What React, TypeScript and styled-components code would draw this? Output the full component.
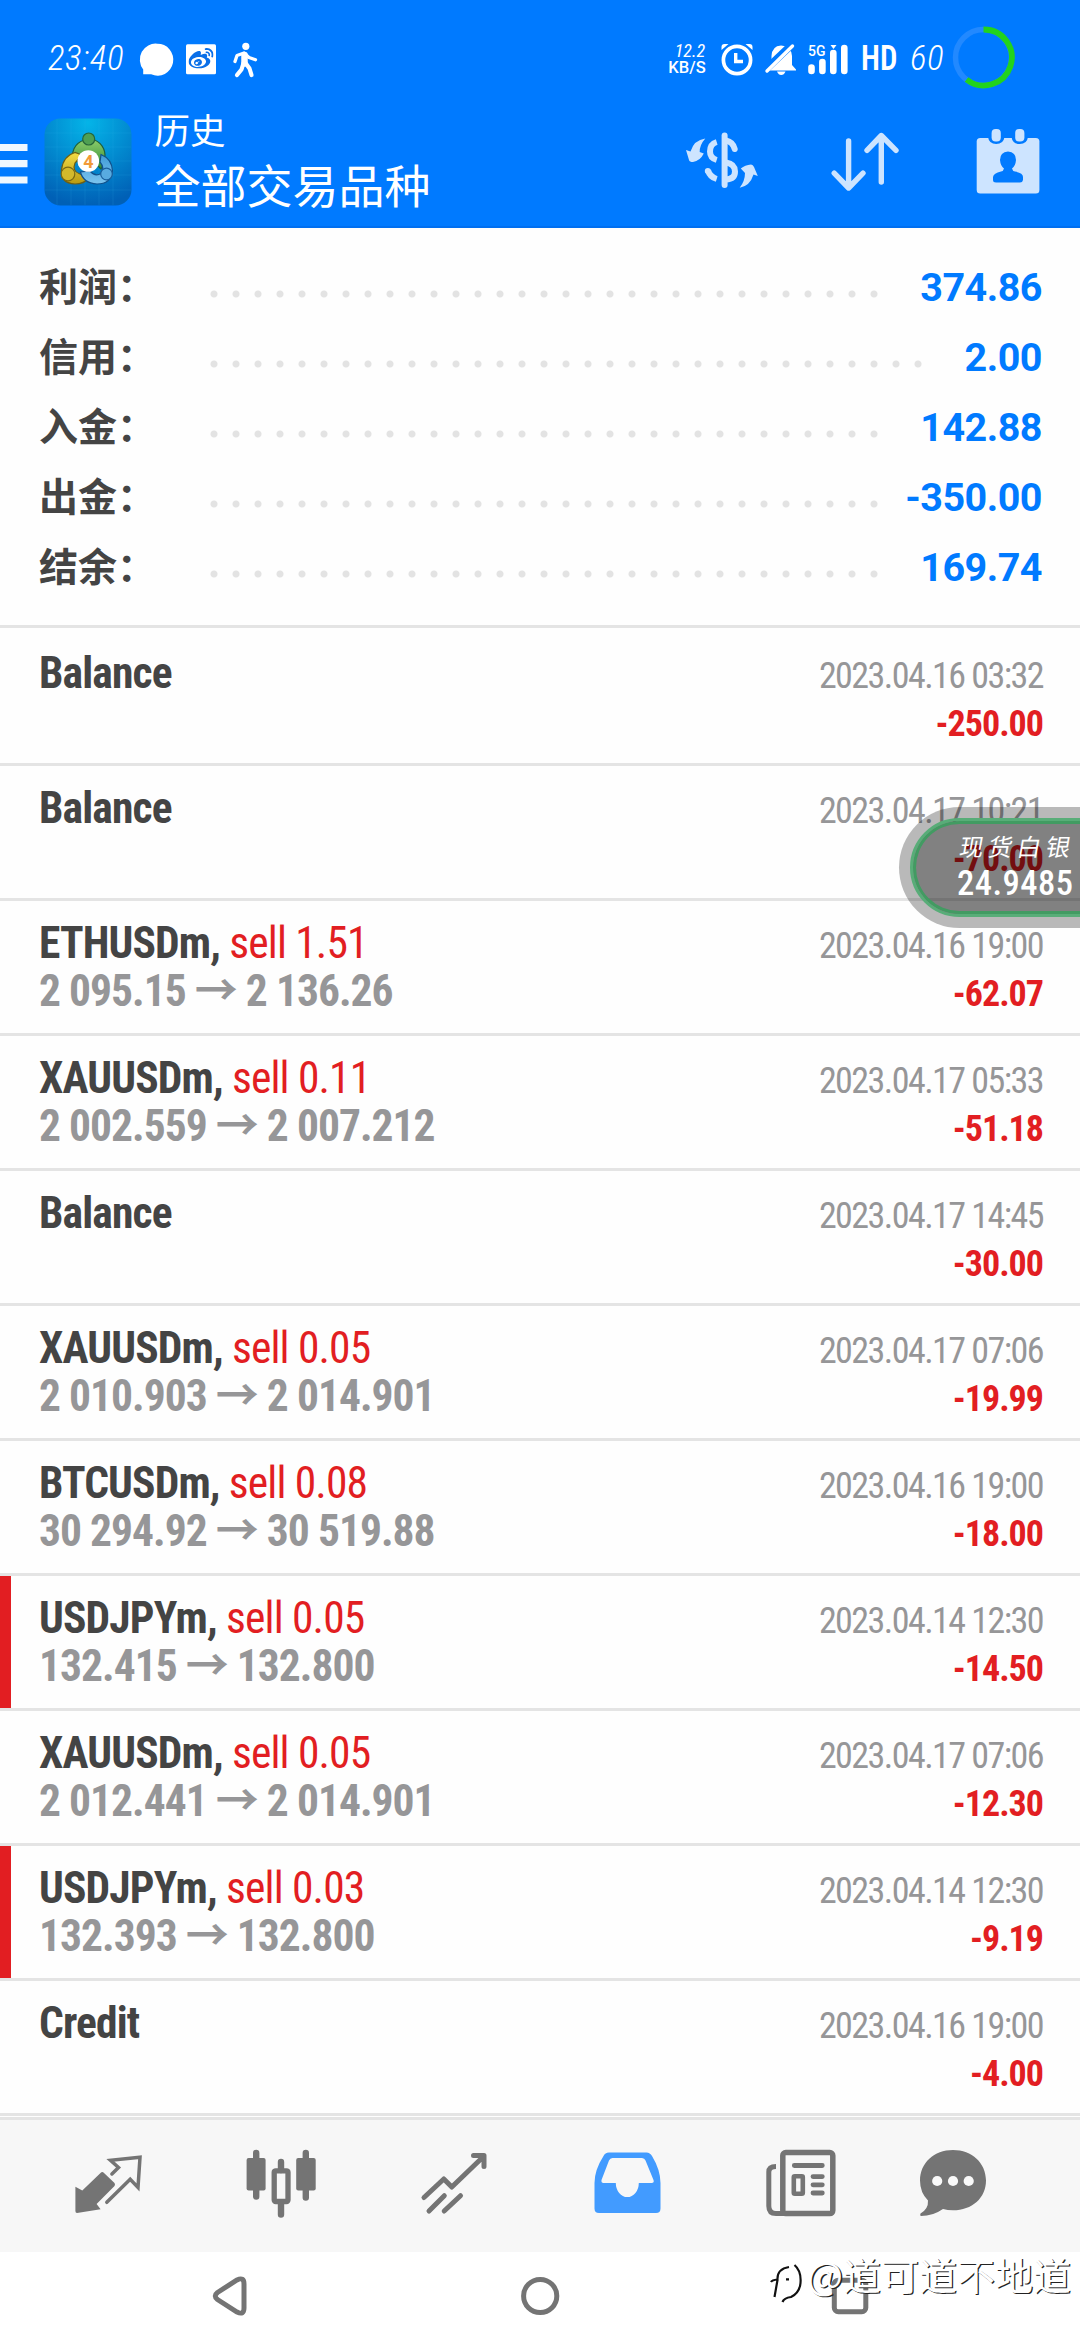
import React from "react";
import styled, { createGlobalStyle } from "styled-components";
import { FaWeibo } from "react-icons/fa";

const BLUE = "#007aff";
const LINE = "#e4e4e4";
const RED = "#e21e22";
const ICON = "#747474";
const TINT = "#cde4ff";

const GlobalStyle = createGlobalStyle`
  *, *::before, *::after { box-sizing: border-box; }
  body { margin: 0; background: #fff; }
`;

const Screen = styled.div`
  position: relative;
  width: 1080px;
  height: 2340px;
  display: flex;
  flex-direction: column;
  overflow: hidden;
  background: #fefefe;
  font-family: "Roboto Condensed", "Noto Sans CJK SC", sans-serif;
  font-variant-ligatures: none;
`;

const Header = styled.header`
  flex: none;
  height: 228px;
  background: ${BLUE};
  border-bottom: 2px solid #006ff0;
  color: #fff;
`;

const StatusBar = styled.div`
  display: flex;
  align-items: center;
  height: 111px;
  padding: 6px 0 0 46px;
`;

const StatusGroup = styled.div`
  display: flex;
  align-items: center;
  &:last-child {
    margin-left: auto;
  }
`;

const StatusDigits = styled.span<{ $width: number; $indent: number }>`
  width: ${(p) => p.$width}px;
  font-size: 35px;
  line-height: 35px;
  font-style: italic;
  font-weight: 350;
  letter-spacing: 0.6px;
  padding-left: ${(p) => p.$indent}px;
  white-space: nowrap;
`;

const NetSpeed = styled.div`
  width: 50px;
  display: flex;
  flex-direction: column;
  align-items: center;
  white-space: nowrap;
`;

const SpeedValue = styled.span`
  font-size: 18px;
  line-height: 17px;
  font-style: italic;
  font-weight: 400;
  padding-left: 6px;
`;

const SpeedUnit = styled.span`
  font-family: Roboto, sans-serif;
  font-size: 16.5px;
  font-weight: 500;
  line-height: 17px;
`;

const HdLabel = styled.span`
  width: 48px;
  padding-left: 7px;
  font-size: 35px;
  line-height: 35px;
  font-weight: 600;
  span {
    display: inline-block;
    transform: scaleX(0.88);
    transform-origin: left;
  }
`;

const Toolbar = styled.div`
  display: flex;
  height: 115px;
`;

const Titles = styled.div`
  display: flex;
  flex-direction: column;
  flex: 1;
  padding-left: 4.5px;
  font-family: "Noto Sans CJK SC", sans-serif;
`;

const Caption = styled.span`
  font-size: 35.5px;
  line-height: 36px;
`;

const Title = styled.span`
  margin-top: 8px;
  font-size: 46px;
  line-height: 56px;
`;

const Summary = styled.section`
  flex: none;
  padding: 23px 38px 24px 39px;
  border-bottom: 3px solid ${LINE};
`;

const SummaryRow = styled.div`
  display: flex;
  align-items: center;
  height: 70px;
`;

const SummaryLabel = styled.span`
  width: 163.5px;
  font-family: "Noto Sans CJK SC", sans-serif;
  font-weight: 700;
  font-size: 39px;
  line-height: 60px;
  margin-top: -4px;
  color: #444;
`;

const Leader = styled.span<{ $dots: number }>`
  width: ${(p) => p.$dots * 22}px;
  height: 22px;
  margin-top: 16px;
  background: radial-gradient(circle, #e3e3e3 3px, transparent 4px) 0 0 / 22px 22px repeat-x;
`;

const SummaryValue = styled.span`
  margin-left: auto;
  margin-top: 3px;
  font-family: Roboto, sans-serif;
  font-weight: 700;
  font-size: 39.5px;
  letter-spacing: -0.5px;
  line-height: 48px;
  color: ${BLUE};
`;

const Deals = styled.main`
  flex: none;
  padding-top: 3px;
`;

const DealRow = styled.article<{ $flagged: boolean }>`
  position: relative;
  display: flex;
  flex-direction: column;
  height: 135px;
  padding: 19px 37px 0 39px;
  border-bottom: 3px solid ${LINE};
  &::before {
    content: "";
    display: ${(p) => (p.$flagged ? "block" : "none")};
    position: absolute;
    left: 0;
    top: 0;
    bottom: 0;
    width: 11px;
    background: ${RED};
  }
`;

const DealLine = styled.div`
  display: flex;
  align-items: baseline;
  justify-content: space-between;
  height: 48px;
  line-height: 48px;
  white-space: pre;
  &::before {
    content: "\\200b";
    width: 0;
    font-size: 43.5px;
  }
`;

const Symbol = styled.span`
  flex: 1;
  font-size: 43.5px;
  font-weight: 680;
  letter-spacing: -0.85px;
  color: #444;
`;

const Side = styled.span`
  font-weight: 400;
  color: ${RED};
`;

const Prices = styled.span`
  font-size: 43.5px;
  font-weight: 680;
  letter-spacing: -0.98px;
  color: #969698;
`;

const Arrow = styled.span`
  font-family: "Noto Sans CJK SC", sans-serif;
  font-weight: 700;
  font-size: 43px;
  line-height: 0;
`;

const Stamp = styled.time`
  font-size: 36px;
  letter-spacing: -1.55px;
  color: #969698;
`;

const Amount = styled.span`
  margin-left: auto;
  font-size: 36px;
  font-weight: 700;
  letter-spacing: -1px;
  color: ${RED};
`;

const Ticker = styled.aside`
  position: absolute;
  left: 899px;
  top: 807px;
  width: 240px;
  height: 121px;
  padding: 11px;
  border-radius: 61px;
  background: rgba(0, 0, 0, 0.27);
`;

const TickerFace = styled.div`
  display: flex;
  flex-direction: column;
  height: 99px;
  padding: 9px 0 0 44px;
  border: 3px solid #58ad78;
  border-radius: 50px;
  background: rgba(0, 0, 0, 0.3);
  box-shadow: inset 0 0 0 3px #429b62;
  color: #fff;
`;

const TickerName = styled.span`
  font-family: "Noto Sans CJK SC", sans-serif;
  font-size: 24px;
  line-height: 32px;
  letter-spacing: 4.8px;
  transform: skewX(-10deg);
  white-space: nowrap;
  padding-left: 3px;
`;

const TickerPrice = styled.span`
  font-family: "Roboto Condensed", sans-serif;
  font-weight: 500;
  font-size: 34.5px;
  letter-spacing: 0.5px;
  line-height: 42px;
`;

const TabBar = styled.nav`
  flex: none;
  display: flex;
  height: 135px;
  margin-top: 1px;
  background: #f7f7f7;
  border-top: 3px solid ${LINE};
`;

const SystemNav = styled.nav`
  display: flex;
  height: 88px;
  background: #fff;
`;

const Watermark = styled.div`
  position: absolute;
  left: 768px;
  top: 2244px;
  display: flex;
  align-items: center;
  height: 60px;
  font-family: "Noto Sans CJK SC", sans-serif;
  font-size: 38px;
  line-height: 60px;
  color: #fff;
  text-shadow: 1.4px 1.4px 0.5px #222;
  white-space: nowrap;
`;

const Canvas = styled.svg`
  flex: none;
  display: block;
`;

type GlyphProps = { x: number; y: number; w: number; h: number; children: React.ReactNode };
const Glyph = ({ x, y, w, h, children }: GlyphProps) => (
  <Canvas width={w} height={h} viewBox={`${x} ${y} ${w} ${h}`} fill="none">
    {children}
  </Canvas>
);

const status = { y: 6, h: 105 };
const tool = { y: 111, h: 115 };
const tab = { y: 2120, h: 132 };
const sys = { y: 2252, h: 88 };

const AppLogo = () => (
  <Glyph x={36} w={114} {...tool}>
    <defs>
      <radialGradient id="tile" cx="0.5" cy="0.05" r="0.95">
        <stop offset="0" stopColor="#04b4e8" />
        <stop offset="0.5" stopColor="#028bd0" />
        <stop offset="1" stopColor="#0060b6" />
      </radialGradient>
      <linearGradient id="leaf" x1="0" y1="0" x2="0" y2="1">
        <stop offset="0" stopColor="#8fce6c" />
        <stop offset="1" stopColor="#2f8a36" />
      </linearGradient>
      <linearGradient id="gold" x1="0" y1="0" x2="0" y2="1">
        <stop offset="0" stopColor="#f3dc45" />
        <stop offset="1" stopColor="#b89a12" />
      </linearGradient>
      <linearGradient id="sky" x1="0" y1="0" x2="0" y2="1">
        <stop offset="0" stopColor="#3f9bd8" />
        <stop offset="1" stopColor="#7cc4ee" />
      </linearGradient>
    </defs>
    <rect x="44.500" y="118.500" width="87" height="87" rx="16" fill="url(#tile)" />
    <path
      d="M57 119V205M71 119V205M85 119V205M99 119V205M113 119V205M45 133H131M45 147H131M45 161H131M45 175H131M45 190H131"
      stroke="#3fc0ee"
      strokeOpacity="0.14"
    />
    <g strokeWidth="1.200">
      <path d="M88.500 139C98 139 104.500 146 105 155Q105 163 101 169L95 163Q97 154 88.500 153Q80 154 82 163L72.500 160Q71 142 88.500 139Z" fill="url(#leaf)" stroke="#1e5f3a" />
      <path d="M75 152.500Q63 156 61.500 170Q60 183 75 184Q84 184 89 178L79 173.500Q72 171 75 163L82 155Z" fill="url(#gold)" stroke="#6b5f16" />
      <path d="M101 154.500Q112 159 112.500 171Q111 184 97 184Q83 183 80.500 172L90 171Q95 177 101 173.500Q105 168 100 162Z" fill="url(#sky)" stroke="#11518c" />
      <circle cx="88.700" cy="139" r="6" fill="#4fa052" stroke="#26663a" />
      <circle cx="68" cy="174" r="6.800" fill="#d3b92c" stroke="#7b6a14" />
      <circle cx="106.500" cy="174" r="5.800" fill="#58abe0" stroke="#1a5f9c" />
    </g>
    <circle cx="88.300" cy="161" r="10.800" fill="#fff" />
    <text x="88.300" y="167.500" textAnchor="middle" fontFamily="Roboto, sans-serif" fontWeight="700" fontSize="18" fill="#f19a38">
      4
    </text>
  </Glyph>
);

const summary = [
  { label: "利润：", value: "374.86", dots: 31 },
  { label: "信用：", value: "2.00", dots: 33 },
  { label: "入金：", value: "142.88", dots: 31 },
  { label: "出金：", value: "-350.00", dots: 31 },
  { label: "结余：", value: "169.74", dots: 31 },
];

type Deal = { name: string; side?: string; from?: string; to?: string; time: string; amount: string; flagged?: boolean };
const deals: Deal[] = [
  { name: "Balance", time: "2023.04.16 03:32", amount: "-250.00" },
  { name: "Balance", time: "2023.04.17 10:21", amount: "-70.00" },
  { name: "ETHUSDm", side: "sell 1.51", from: "2 095.15", to: "2 136.26", time: "2023.04.16 19:00", amount: "-62.07" },
  { name: "XAUUSDm", side: "sell 0.11", from: "2 002.559", to: "2 007.212", time: "2023.04.17 05:33", amount: "-51.18" },
  { name: "Balance", time: "2023.04.17 14:45", amount: "-30.00" },
  { name: "XAUUSDm", side: "sell 0.05", from: "2 010.903", to: "2 014.901", time: "2023.04.17 07:06", amount: "-19.99" },
  { name: "BTCUSDm", side: "sell 0.08", from: "30 294.92", to: "30 519.88", time: "2023.04.16 19:00", amount: "-18.00" },
  { name: "USDJPYm", side: "sell 0.05", from: "132.415", to: "132.800", time: "2023.04.14 12:30", amount: "-14.50", flagged: true },
  { name: "XAUUSDm", side: "sell 0.05", from: "2 012.441", to: "2 014.901", time: "2023.04.17 07:06", amount: "-12.30" },
  { name: "USDJPYm", side: "sell 0.03", from: "132.393", to: "132.800", time: "2023.04.14 12:30", amount: "-9.19", flagged: true },
  { name: "Credit", time: "2023.04.16 19:00", amount: "-4.00" },
];

export default function App() {
  return (
    <Screen>
      <GlobalStyle />
      <Header>
        <StatusBar>
          <StatusGroup>
            <StatusDigits $width={90} $indent={2}>23:40</StatusDigits>
            <Glyph x={136} w={44} {...status}>
              <path d="M157.200 43.700a15.700 16 0 1 1-6 30.600H143.200V69.500A15.700 16 0 0 1 157.200 43.700z" fill="#fff" />
            </Glyph>
            <Glyph x={180} w={44} {...status}>
              <rect x="186" y="44.300" width="30" height="30" rx="1.500" fill="#fff" />
              <FaWeibo x={188.500} y={46.500} size={25} color="#0a6fe8" />
            </Glyph>
            <Glyph x={224} w={40} {...status}>
              <circle cx="245.800" cy="46.300" r="3.600" fill="#fff" />
              <g stroke="#fff" strokeLinecap="round" strokeLinejoin="round">
                <path d="M235 61.500L237 55.500L244 53L249 57.500L255.500 59.800" strokeWidth="3.300" />
                <path d="M244.500 55V63.500" strokeWidth="6.500" />
                <path d="M243.500 63L241.500 69.500L237 75M245.500 63L249.500 68.500L251.500 75" strokeWidth="4.200" />
              </g>
            </Glyph>
          </StatusGroup>
          <StatusGroup>
            <NetSpeed>
              <SpeedValue>12.2</SpeedValue>
              <SpeedUnit>KB/S</SpeedUnit>
            </NetSpeed>
            <Glyph x={712} w={48} {...status}>
              <circle cx="737" cy="60" r="13.600" stroke="#fff" strokeWidth="3.700" />
              <path d="M735.700 53V61.500H743" stroke="#fff" strokeWidth="3.400" />
              <path d="M721.500 50V47Q721.500 44 724.500 44H728.500ZM752.500 50V47Q752.500 44 749.500 44H745.500Z" fill="#fff" />
            </Glyph>
            <Glyph x={760} w={42} {...status}>
              <path d="M768 70.500L771.500 66V56Q772 46 781 45.500Q791 46 792 56V65L796 69.500V70.500Z" fill="#fff" />
              <path d="M777 71.500H785.500Q784 75 781.200 75Q778.500 75 777 71.500Z" fill="#fff" />
              <path d="M764 71L794 42.500" stroke={BLUE} strokeWidth="7.500" />
              <path d="M767 71L792.500 46" stroke="#fff" strokeWidth="3.400" strokeLinecap="round" />
            </Glyph>
            <Glyph x={802} w={52} {...status}>
              <text x="808" y="56" fontFamily="Roboto, sans-serif" fontSize="14.500" fontWeight="500" fill="#fff" textLength="17.500" lengthAdjust="spacingAndGlyphs">
                5G
              </text>
              <path d="M811.500 67.500V71M822.400 62V71M833.300 53V71M844.300 48V71" stroke="#fff" strokeWidth="6.600" strokeLinecap="round" />
              <path d="M830.500 45H836.500L833.500 49Z" fill="#fff" />
            </Glyph>
            <HdLabel>
              <span>HD</span>
            </HdLabel>
            <StatusDigits $width={46} $indent={8}>60</StatusDigits>
            <Glyph x={948} w={132} {...status}>
              <circle cx="983.500" cy="57.500" r="28" stroke="#2289ff" strokeWidth="5.500" />
              <path d="M983.500 29.500A28 28 0 1 1 966.500 79.500" stroke="#22d31c" strokeWidth="5.800" />
            </Glyph>
          </StatusGroup>
        </StatusBar>
        <Toolbar>
          <Glyph x={0} w={36} {...tool}>
            <path d="M0 147.500H27.500M0 163.700H27.500M0 180H27.500" stroke="#f0f7ff" strokeWidth="7.200" />
          </Glyph>
          <AppLogo />
          <Titles>
            <Caption>历史</Caption>
            <Title>全部交易品种</Title>
          </Titles>
          <Glyph x={670} w={110} {...tool}>
            <g stroke={TINT} strokeWidth="6">
              <path d="M724.600 135.500V185" strokeLinecap="round" />
              <path d="M726 140.500Q733 142 734.700 149" strokeLinecap="round" />
              <path d="M726 162.500Q735 164 735 171.500Q735 179 726 179.500" />
              <path d="M716.700 142Q710 144 710 151.500Q710 158 716.700 160M708 170.500Q710 177 716.700 179" />
            </g>
            <circle cx="707.800" cy="171" r="3" fill={TINT} />
            <path d="M686 150L690.500 151.500Q694 140 705.300 138.500Q699.500 145 699.700 152L703.800 153.500Q700 161 693 162Q689.500 162 689 160Z" fill={TINT} />
            <path d="M740.800 168.500Q745 165 751 164.500Q753 164.500 754 167L757.800 176L753.500 174.500Q750 186 739.700 187.700Q745 181 745 173Z" fill={TINT} />
          </Glyph>
          <Glyph x={780} w={170} {...tool}>
            <path
              d="M848.600 141V187M834.200 173.200L848.600 188L863 173.200M881.300 182V136M867 150.300L881.300 135.500L896 150.300"
              stroke={TINT}
              strokeWidth="5.400"
              strokeLinecap="round"
              strokeLinejoin="round"
            />
          </Glyph>
          <Glyph x={950} w={130} {...tool}>
            <rect x="976.700" y="138" width="62.700" height="55.600" rx="3.500" fill={TINT} />
            <path d="M988 137H1004.500Q1003.500 144 996.200 144Q989 144 988 137ZM1011.500 137H1028Q1027 144 1019.800 144Q1012.500 144 1011.500 137Z" fill={BLUE} />
            <rect x="991.600" y="129" width="9.200" height="12.500" rx="4" fill={TINT} />
            <rect x="1015.200" y="129" width="9.200" height="12.500" rx="4" fill={TINT} />
            <path
              d="M1008 151.500Q1016 152 1016 160Q1015.500 166 1012 168.500Q1012.500 171 1015 171.500Q1023 173 1023 177V180Q1022.500 182.500 1020 182.500H996Q993 182.500 993 180V177Q993.500 173 1001 171.500Q1003.500 171 1004 168.500Q1000.500 166 1000 160Q1000 152 1008 151.500Z"
              fill={BLUE}
            />
          </Glyph>
        </Toolbar>
      </Header>

      <Summary>
        {summary.map((s) => (
          <SummaryRow key={s.label}>
            <SummaryLabel>{s.label}</SummaryLabel>
            <Leader $dots={s.dots} />
            <SummaryValue>{s.value}</SummaryValue>
          </SummaryRow>
        ))}
      </Summary>

      <Deals>
        {deals.map((d, i) => (
          <DealRow key={i} $flagged={!!d.flagged}>
            <DealLine>
              <Symbol>
                {d.name}
                {d.side && (
                  <>
                    {", "}
                    <Side>{d.side}</Side>
                  </>
                )}
              </Symbol>
              <Stamp>{d.time}</Stamp>
            </DealLine>
            <DealLine>
              {d.from && (
                <Prices>
                  {d.from} <Arrow>→</Arrow> {d.to}
                </Prices>
              )}
              <Amount>{d.amount}</Amount>
            </DealLine>
          </DealRow>
        ))}
      </Deals>

      <TabBar>
        <Glyph x={0} w={195} {...tab}>
          <path d="M75.400 2186.700L82.300 2190.500L100.500 2173Q102.300 2171 104 2173L114.500 2183Q115.500 2184.500 114.500 2186L96.600 2204L100.600 2209.300L77 2213Q75.400 2213 75.400 2211Z" fill={ICON} />
          <path
            d="M111.900 2174L118.500 2167.500L110.500 2160.300L140 2157.300L138 2187.500L130.200 2179.300L106.800 2202.300"
            stroke={ICON}
            strokeWidth="3.500"
            strokeLinecap="round"
          />
        </Glyph>
        <Glyph x={195} w={173} {...tab}>
          <path d="M256.200 2153V2196.500M281 2162V2170M281 2203V2214.500M305.800 2153V2197.500" stroke={ICON} strokeWidth="6.400" strokeLinecap="round" />
          <rect x="246.600" y="2158" width="19" height="32.500" rx="2" fill={ICON} />
          <rect x="296.200" y="2158" width="19.500" height="32.500" rx="2" fill={ICON} />
          <rect x="274.200" y="2170.800" width="13.800" height="30.700" rx="1.500" stroke={ICON} strokeWidth="5.300" />
        </Glyph>
        <Glyph x={368} w={173} {...tab}>
          <path
            d="M424 2197.500L443.800 2179L451.800 2187L483.500 2156.500M473.500 2155.500H484V2166.500M429 2211L444.300 2195.700M444.200 2211L460.500 2195.700"
            stroke={ICON}
            strokeWidth="5"
            strokeLinecap="round"
            strokeLinejoin="round"
          />
        </Glyph>
        <Glyph x={541} w={173} {...tab}>
          <path
            fillRule="evenodd"
            d="M609 2152.500H646.500Q650 2152.500 652 2156Q660.500 2170 660.500 2183V2208.500Q660.500 2213 656 2213H599Q594.500 2213 594.500 2208.500V2183Q594.500 2170 603.500 2156Q605 2152.500 609 2152.500ZM612.500 2158Q610 2158 609 2160.500L601.500 2180Q601 2183 603.500 2183H615.800A11.400 14 0 0 0 638.800 2183H651.500Q654.500 2183 653.500 2180L645.500 2160.500Q644.500 2158 642 2158Z"
            fill="#429bff"
          />
        </Glyph>
        <Glyph x={714} w={173} {...tab}>
          <g stroke={ICON}>
            <rect x="782.800" y="2152.600" width="50" height="61" rx="3" strokeWidth="5.500" />
            <path d="M776 2166.500Q768.800 2166.500 768.800 2172V2206Q768.800 2213.500 776 2213.500H784" strokeWidth="5" />
            <path d="M794.300 2165.500H822.300M813 2176.600H822.300M813 2184.800H822.300M813 2193H822.300" strokeWidth="4.800" strokeLinecap="round" />
            <rect x="793.800" y="2176.200" width="9" height="17.600" strokeWidth="4.600" rx="1" />
          </g>
        </Glyph>
        <Glyph x={887} w={193} {...tab}>
          <path d="M953 2150C972 2150 986 2163 986 2180.500C986 2198 972 2210.300 953 2210.300Q947.500 2210.300 943 2209Q933 2216 921 2216Q919.500 2215.500 920.500 2213.500Q928.500 2209 928 2200.500Q920 2192.500 920 2180.500C920 2163 934 2150 953 2150Z" fill={ICON} />
          <circle cx="937.200" cy="2181" r="5.100" fill="#f9f9f9" />
          <circle cx="953" cy="2181" r="5.100" fill="#f9f9f9" />
          <circle cx="968.700" cy="2181" r="5.100" fill="#f9f9f9" />
        </Glyph>
      </TabBar>

      <SystemNav>
        <Glyph x={0} w={360} {...sys}>
          <path d="M217.500 2292.500L237 2280Q244 2276.500 244 2284V2308Q244 2315.500 237 2312L217.500 2299.500Q213 2296 217.500 2292.500Z" stroke={ICON} strokeWidth="5" />
        </Glyph>
        <Glyph x={360} w={360} {...sys}>
          <circle cx="540.200" cy="2296" r="16.600" stroke={ICON} strokeWidth="5" />
        </Glyph>
        <Glyph x={720} w={360} {...sys}>
          <rect x="834.300" y="2280.200" width="31.500" height="31.500" rx="4" stroke={ICON} strokeWidth="5" />
        </Glyph>
      </SystemNav>

      <Ticker>
        <TickerFace>
          <TickerName>现货白银</TickerName>
          <TickerPrice>24.9485</TickerPrice>
        </TickerFace>
      </Ticker>

      <Watermark>
        <Glyph x={768} y={2250} w={39} h={60}>
          <path
            d="M774.500 2303L777.500 2286M771 2288Q772 2286 777.500 2285.500Q777 2275 789 2273M794.500 2271Q801.500 2277 800.500 2289Q799.500 2299 791 2303Q784 2304 782.500 2308M786 2285.300H789"
            stroke="#111"
            strokeWidth="2.200"
          />
        </Glyph>
        @道可道不地道
      </Watermark>
    </Screen>
  );
}
